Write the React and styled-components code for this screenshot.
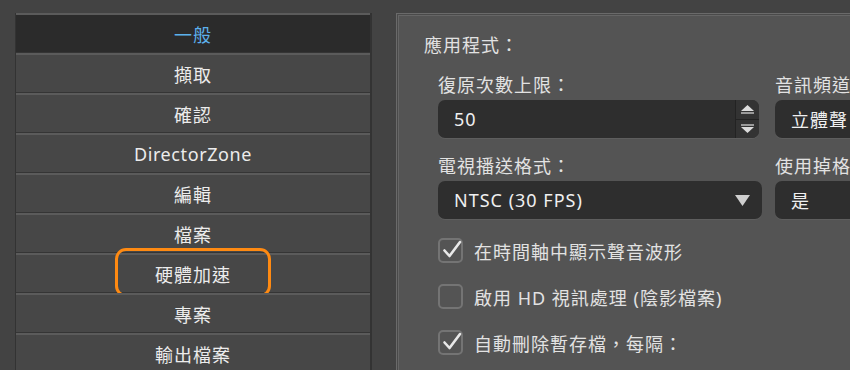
import React from 'react';
import styled, { createGlobalStyle } from 'styled-components';

const GlobalStyle = createGlobalStyle`
  html, body {
    margin: 0;
    padding: 0;
    background: #434343;
    overflow: hidden;
  }
  body {
    font-family: "Noto Sans", "Noto Sans CJK TC", sans-serif;
    color: #e6e6e6;
  }
`;

const Page = styled.div`
  display: flex;
  align-items: flex-start;
  gap: 24px;
  width: 850px;
  height: 370px;
  padding: 13px 0 0 15px;
  box-sizing: border-box;
  overflow: hidden;
`;

const List = styled.div`
  display: flex;
  flex-direction: column;
  width: 357px;
  flex-shrink: 0;
  border-left: 1px solid #333;
  border-right: 2px solid #333;
  box-sizing: border-box;
`;

const Item = styled.div`
  position: relative;
  height: 40px;
  box-sizing: border-box;
  border-top: 2px solid #5b5b5b;
  border-bottom: 1px solid #353535;
  background: ${({ $active }) => ($active ? '#2b2b2b' : '#474747')};
  color: ${({ $active }) => ($active ? '#5cb1ec' : '#ececec')};
  display: flex;
  align-items: center;
  justify-content: center;
  font-size: 18px;
  letter-spacing: ${({ $latin }) => ($latin ? '0.6px' : '1px')};
`;

const Callout = styled.div`
  position: absolute;
  left: 50%;
  top: -7px;
  width: 156px;
  height: 49px;
  transform: translateX(-50%);
  border: 3px solid #ff8a12;
  border-radius: 11px;
  box-sizing: border-box;
  pointer-events: none;
`;

const Panel = styled.div`
  width: 520px;
  height: 400px;
  flex-shrink: 0;
  background: #545454;
  border: 1px solid #6a6a6a;
  box-shadow: inset 0 0 0 1px #4a4a4a, inset 0 0 0 2px #666;
  box-sizing: border-box;
  padding: 21px 0 0 27px;
`;

const Title = styled.div`
  font-size: 18px;
  line-height: 20px;
  letter-spacing: 1px;
  color: #e2e2e2;
`;

const Grid = styled.div`
  display: grid;
  grid-template-columns: 324px 200px;
  column-gap: 13px;
  row-gap: 18px;
  margin: 20px 0 0 14px;
`;

const Field = styled.div`
  display: flex;
  flex-direction: column;
  gap: 5px;
`;

const Label = styled.div`
  font-size: 18px;
  line-height: 20px;
  letter-spacing: 1px;
  color: #e2e2e2;
  white-space: nowrap;
`;

const Box = styled.div`
  display: flex;
  align-items: center;
  width: ${({ $w }) => $w || '100%'};
  height: 38px;
  box-sizing: border-box;
  background: #2e2e2e;
  border-radius: 7px;
  box-shadow: 0 1px 0 #5e5e5e;
  padding-left: 16px;
  font-size: 18px;
  letter-spacing: 1px;
  color: #f0f0f0;
  overflow: hidden;
`;

const Value = styled.span`
  flex: 1;
  white-space: nowrap;
`;

const Spin = styled.div`
  display: flex;
  flex-direction: column;
  width: 23px;
  height: 100%;
  border-left: 1px solid #232323;
  background: #333;
`;

const SpinHalf = styled.div`
  flex: 1;
  display: flex;
  align-items: center;
  justify-content: center;
  & + & {
    border-top: 1px solid #232323;
  }
`;

const Caret = styled.div`
  width: 26px;
  display: flex;
  justify-content: center;
  margin-right: 7px;
`;

const Checks = styled.div`
  display: flex;
  flex-direction: column;
  gap: 21px;
  margin: 19px 0 0 14px;
`;

const CheckRow = styled.div`
  display: flex;
  align-items: center;
  gap: 11px;
  height: 25px;
  font-size: 18px;
  letter-spacing: 1px;
  color: #e2e2e2;
`;

const CheckBox = styled.div`
  position: relative;
  width: 25px;
  height: 25px;
  box-sizing: border-box;
  border: 2px solid #747474;
  border-radius: 5px;
  svg {
    position: absolute;
    left: 1px;
    top: -1px;
  }
`;

const UpArrow = () => (
  <svg width="13" height="9" viewBox="0 0 13 9">
    <polygon points="0,6 6.5,0 13,6" fill="#dcdcdc" />
    <rect x="0" y="7" width="13" height="2" fill="#9a9a9a" />
  </svg>
);

const DownArrow = () => (
  <svg width="13" height="9" viewBox="0 0 13 9">
    <rect x="0" y="0" width="13" height="2" fill="#9a9a9a" />
    <polygon points="0,3 13,3 6.5,9" fill="#dcdcdc" />
  </svg>
);

const Tick = () => (
  <svg width="22" height="22" viewBox="0 0 22 22">
    <path d="M3.5 11.5 L8.5 17 L19 3" fill="none" stroke="#e8e8e8" strokeWidth="2.6" strokeLinecap="round" strokeLinejoin="round" />
  </svg>
);

const Check = ({ checked, children }) => (
  <CheckRow>
    <CheckBox>{checked && <Tick />}</CheckBox>
    <span>{children}</span>
  </CheckRow>
);

const items = ['一般', '擷取', '確認', 'DirectorZone', '編輯', '檔案', '硬體加速', '專案', '輸出檔案'];

export default function App() {
  return (
    <>
      <GlobalStyle />
      <Page>
        <List>
          {items.map((name, i) => (
            <Item key={name} $active={i === 0} $latin={name === 'DirectorZone'}>
              {name}
              {name === '硬體加速' && <Callout />}
            </Item>
          ))}
        </List>
        <Panel>
          <Title>應用程式：</Title>
          <Grid>
            <Field>
              <Label>復原次數上限：</Label>
              <Box $w="321px">
                <Value>50</Value>
                <Spin>
                  <SpinHalf><UpArrow /></SpinHalf>
                  <SpinHalf><DownArrow /></SpinHalf>
                </Spin>
              </Box>
            </Field>
            <Field>
              <Label>音訊頻道：</Label>
              <Box>
                <Value>立體聲</Value>
              </Box>
            </Field>
            <Field>
              <Label>電視播送格式：</Label>
              <Box>
                <Value>NTSC (30 FPS)</Value>
                <Caret>
                  <svg width="15" height="11" viewBox="0 0 15 11">
                    <polygon points="0,0 15,0 7.5,11" fill="#cfcfcf" />
                  </svg>
                </Caret>
              </Box>
            </Field>
            <Field>
              <Label>使用掉格時間碼：</Label>
              <Box>
                <Value>是</Value>
              </Box>
            </Field>
          </Grid>
          <Checks>
            <Check checked>在時間軸中顯示聲音波形</Check>
            <Check>啟用 HD 視訊處理 (陰影檔案)</Check>
            <Check checked>自動刪除暫存檔，每隔：</Check>
          </Checks>
        </Panel>
      </Page>
    </>
  );
}
